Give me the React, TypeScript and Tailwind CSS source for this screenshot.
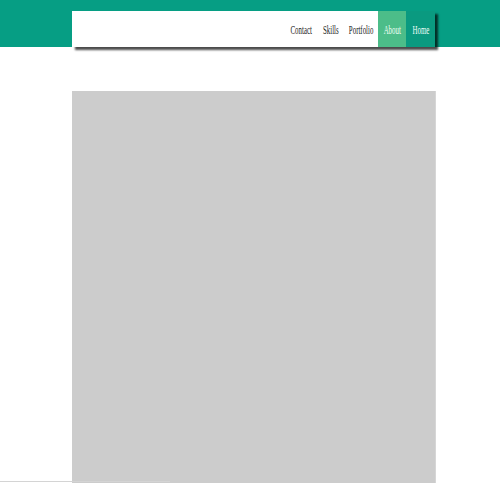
import React from "react";

const items = [
  { label: "Contact", w: "w-[32px]", cls: "text-[#222222]" },
  { label: "Skills", w: "w-[27px]", cls: "text-[#222222]" },
  { label: "Portfolio", w: "w-[34px]", cls: "text-[#222222]" },
  { label: "About", w: "w-[28px]", cls: "text-[#f0fff6] bg-[#4cbd89]" },
  { label: "Home", w: "w-[29px]", cls: "text-[#f2fffa] bg-[#0a9a80]" },
];

export default function App() {
  return (
    <div className="h-[483px] w-[500px] bg-white overflow-hidden relative" style={{ fontFamily: '"Liberation Serif", "Times New Roman", serif' }}>
      <div className="h-[47px] bg-[#069e84] pt-[11px]">
        <div className="ml-[72px] w-[363px] h-[36px] bg-white shadow-[3px_3px_2px_rgba(0,0,0,0.7)] flex justify-end">
          {items.map((it) => (
            <div key={it.label} className={`${it.w} h-[36px] flex items-center justify-center ${it.cls}`}>
              <span className="inline-block text-[13px] leading-none whitespace-nowrap scale-x-[0.53]">{it.label}</span>
            </div>
          ))}
        </div>
      </div>
      <div className="ml-[72px] mt-[44px] w-[364px] h-[420px] bg-[#cccccc] border-r border-[#d6d6d6]" />
      <div className="absolute left-0 bottom-[1px] w-[170px] h-[1px] bg-[#d4d4d4]" />
    </div>
  );
}
